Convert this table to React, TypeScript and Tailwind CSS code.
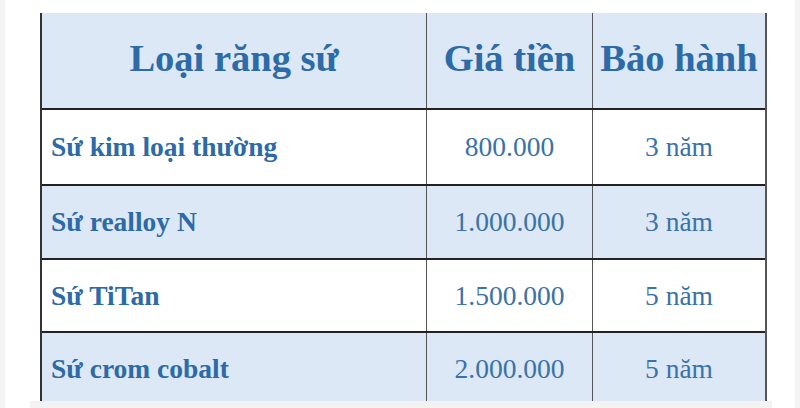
const rows = [
  { name: 'Sứ kim loại thường', price: '800.000', warranty: '3 năm', h: 'h-[76px]', shaded: false },
  { name: 'Sứ realloy N', price: '1.000.000', warranty: '3 năm', h: 'h-[74px]', shaded: true },
  { name: 'Sứ TiTan', price: '1.500.000', warranty: '5 năm', h: 'h-[73px]', shaded: false },
  { name: 'Sứ crom cobalt', price: '2.000.000', warranty: '5 năm', h: 'h-[74px]', shaded: true },
]

export default function App() {
  return (
    <div
      className="flex h-[408px] w-[800px] overflow-hidden bg-white"
      style={{ fontFamily: '"Liberation Serif", "Times New Roman", serif' }}
    >
      <div className="w-[5px] shrink-0 bg-[#f4f4f4]" />
      <div className="flex w-[790px] flex-col pt-[13px]">
        <div className="ml-[35px] h-[388px] w-[727px] overflow-hidden border-x-2 border-l-[#333] border-r-[#555] text-[#2c6aa8]">
          <div className="grid h-[97px] grid-cols-[384px_166px_173px] border-b-2 border-[#222] bg-[#dce8f5] text-[38.5px] font-bold">
            <div className="flex items-center justify-center pb-[4px]">Loại răng sứ</div>
            <div className="flex items-center justify-center border-l-[1.5px] border-[#555] pb-[4px]">Giá tiền</div>
            <div className="flex items-center justify-center border-l-[1.5px] border-[#555] pb-[4px]">Bảo hành</div>
          </div>
          {rows.map((row) => (
            <div
              key={row.name}
              className={`grid ${row.h} grid-cols-[384px_166px_173px] border-b-2 border-[#222] text-[27.5px] ${
                row.shaded ? 'bg-[#dce8f5]' : 'bg-white'
              }`}
            >
              <div className="flex items-center pl-[9px] font-bold">{row.name}</div>
              <div className="flex items-center justify-center border-l-[1.5px] border-[#555] text-[#3a72aa]">{row.price}</div>
              <div className="flex items-center justify-center border-l-[1.5px] border-[#555] text-[#3a72aa]">{row.warranty}</div>
            </div>
          ))}
        </div>
        <div className="ml-[25px] h-[7px] w-[742px] bg-[#f3f3f3]" />
      </div>
      <div className="w-[5px] shrink-0 bg-[#f4f4f4]" />
    </div>
  )
}
